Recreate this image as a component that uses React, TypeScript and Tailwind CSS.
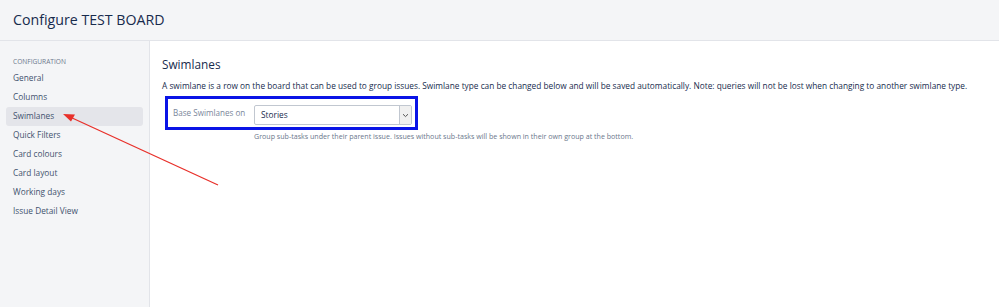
import React from "react";

const items = ["General", "Columns", "Swimlanes", "Quick Filters", "Card colours", "Card layout", "Working days", "Issue Detail View"];

export default function App() {
  return (
    <div className="relative w-[999px] h-[307px] overflow-hidden bg-[#f4f5f7] text-[#172b4d] flex flex-col" style={{ fontFamily: '"Open Sans", "Noto Sans", sans-serif' }}>
      <header className="h-[41px] shrink-0 border-b border-[#e2e4e9] flex items-center pl-[13px]">
        <h1 className="text-[14.2px] leading-none text-[#172b4d]">Configure TEST BOARD</h1>
      </header>
      <div className="flex flex-1">
        <nav className="w-[150px] shrink-0 border-r border-[#e2e4e9] pt-[16px] px-[6px]">
          <div className="text-[6.6px] uppercase text-[#6b778c] pl-[7px] leading-[10px] mb-[2px]">Configuration</div>
          <ul>
            {items.map((it) => (
              <li
                key={it}
                className={`h-[19px] flex items-center pl-[7px] text-[8.3px] text-[#42526e] rounded-[3px] ${it === "Swimlanes" ? "bg-[#e4e5ea]" : ""}`}
              >
                {it}
              </li>
            ))}
          </ul>
        </nav>
        <main className="flex-1 bg-white pl-[12px] pt-[15px]">
          <h2 className="text-[11.8px] leading-[16px] text-[#172b4d]">Swimlanes</h2>
          <p className="text-[8.3px] leading-[12px] mt-[8px] text-[#172b4d] whitespace-nowrap">
            A swimlane is a row on the board that can be used to group issues. Swimlane type can be changed below and will be saved automatically. Note: queries will not be lost when changing to another swimlane type.
          </p>
          <div className="ml-[3px] mt-[4px] w-[253px] h-[34px] border-[3px] border-[#0a14e6] flex items-center">
            <span className="text-[8.1px] text-[#7a869a] pl-[5px] w-[86px]">Base Swimlanes on</span>
            <div className="w-[158px] h-[20px] mt-[4px] border border-[#c1c7d0] rounded-[2px] flex items-center bg-white">
              <span className="flex-1 pl-[6px] text-[8.3px] text-[#172b4d]">Stories</span>
              <span className="w-[12px] h-[18px] border-l border-[#c1c7d0] bg-[#f0f0f0] flex items-center justify-center">
                <svg width="7" height="5" viewBox="0 0 7 5"><path d="M1 1.2 L3.5 3.6 L6 1.2" fill="none" stroke="#555" strokeWidth="1" /></svg>
              </span>
            </div>
          </div>
          <p className="text-[7.1px] text-[#6b778c] ml-[92px] mt-[1px] whitespace-nowrap">
            Group sub-tasks under their parent issue. Issues without sub-tasks will be shown in their own group at the bottom.
          </p>
        </main>
      </div>
      <svg className="absolute left-0 top-0 pointer-events-none" width="999" height="307">
        <line x1="218" y1="185" x2="70" y2="117" stroke="#e8302a" strokeWidth="1.3" />
        <polygon points="63,114 75,114.5 71,121.5" fill="#e8302a" />
      </svg>
    </div>
  );
}
